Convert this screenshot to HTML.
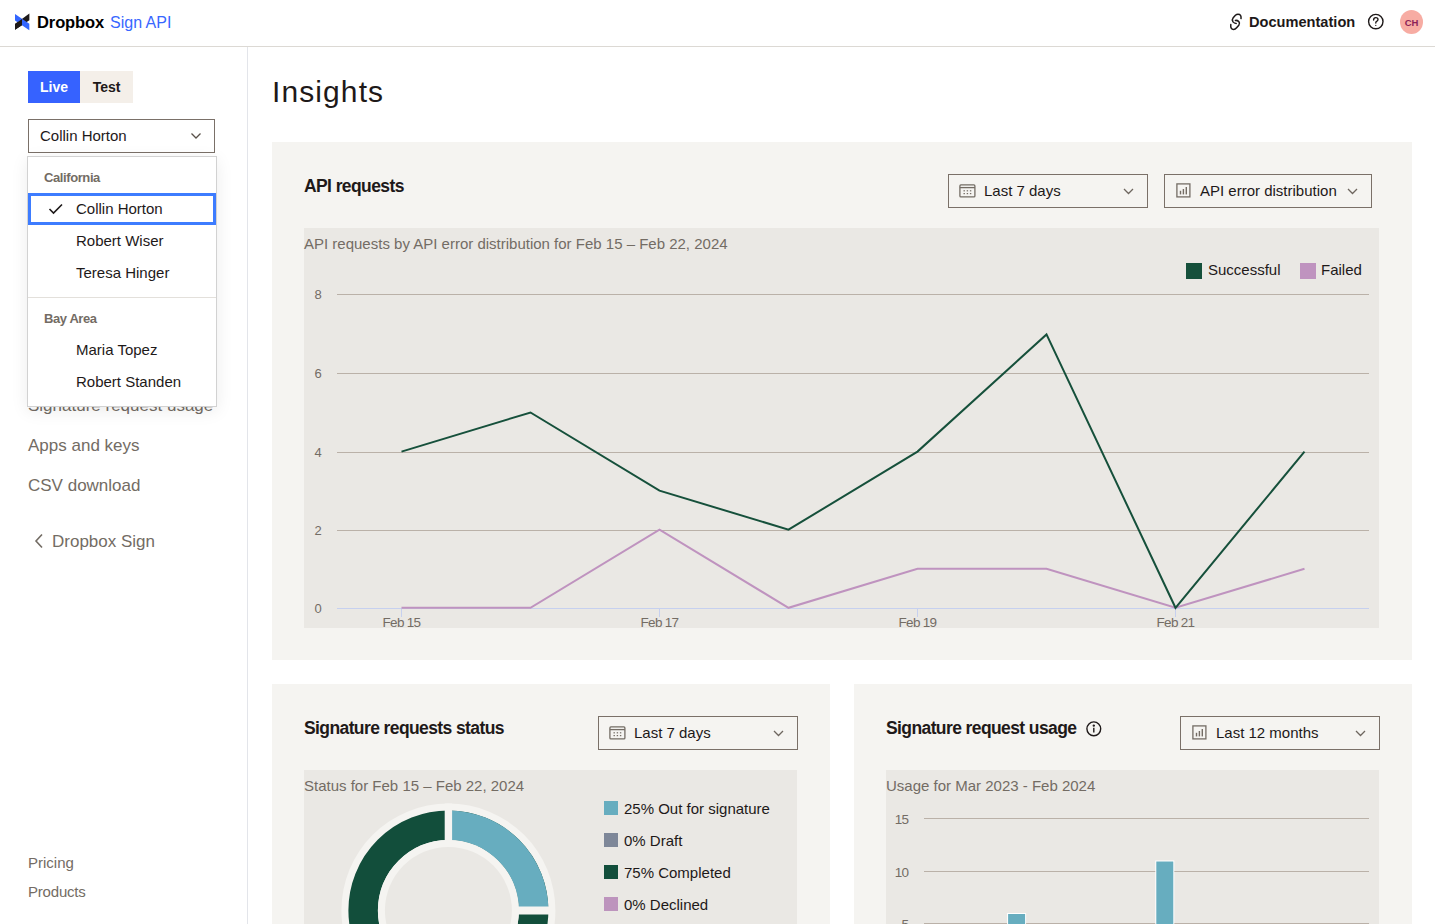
<!DOCTYPE html>
<html><head><meta charset="utf-8">
<style>
*{box-sizing:border-box;margin:0;padding:0}
html,body{width:1435px;height:924px;overflow:hidden;background:#fff;font-family:"Liberation Sans",sans-serif;color:#1e1919}
.a{position:absolute}
.hdr{left:0;top:0;width:1435px;height:47px;border-bottom:1px solid #dcd9d4;background:#fff}
.side{left:0;top:47px;width:248px;height:877px;border-right:1px solid #e3e5ea;background:#fff}
.nav{left:28px;font-size:17px;color:#736c64;white-space:nowrap}
.card{background:#f5f4f1}
.area{background:#eae8e4}
.sel{border:1px solid #7a7068;background:#f5f4f1;height:34px}
.sel .t{position:absolute;top:8px;font-size:15px;color:#1e1919;white-space:nowrap}
.sub{font-size:15px;color:#736c64;white-space:nowrap}
.ttl{font-size:17.5px;font-weight:bold;white-space:nowrap;letter-spacing:-0.6px}
.yl{font-size:13px;color:#736c64}
.xl{font-size:12px;color:#736c64;white-space:nowrap}
.mi{position:absolute;left:76px;font-size:15px;color:#1e1919;white-space:nowrap}
.lg{position:absolute;font-size:15px;color:#1e1919;white-space:nowrap}
.sq{position:absolute;width:15px;height:15px}
</style></head><body>

<!-- header -->
<div class="a hdr"></div>
<svg class="a" style="left:0;top:0" width="40" height="40" viewBox="0 0 40 40">
  <defs><clipPath id="lh"><rect x="0" y="0" width="22" height="40"/></clipPath></defs>
  <polygon points="15,24 29.4,13.6 29.4,20.2 15,29.8" fill="#1e1919"/>
  <polygon points="15,13.9 29.3,23.8 29.3,30.3 15,20.4" fill="#3366ff"/>
  <polygon points="15,24 29.4,13.6 29.4,20.2 15,29.8" fill="#1e1919" clip-path="url(#lh)"/>
</svg>
<div class="a" style="left:37px;top:13px;font-size:16.5px;font-weight:bold;color:#000;white-space:nowrap;letter-spacing:-0.1px">Dropbox</div>
<div class="a" style="left:110px;top:14px;font-size:16px;color:#3867ff;white-space:nowrap">Sign API</div>

<svg class="a" style="left:1224px;top:10px" width="24" height="24" viewBox="0 0 24 24" fill="none" stroke="#1e1919" stroke-width="1.5" stroke-linecap="round">
  <path d="M17 8.6 Q17.6 4.2 14 4.2 Q12.6 4.2 11.4 5.3 L9.2 7.8 Q7.6 9.8 9 11.9 Q10.2 13.4 12.2 13.4"/>
  <path d="M11.4 10.4 Q13.4 10.2 14.8 11.6 Q16.2 13.2 14.8 15.2 L12.6 17.8 Q11.2 19.5 9.6 19.5 Q6.2 19.3 6.8 14.6"/>
</svg>
<div class="a" style="left:1249px;top:14px;font-size:14.6px;font-weight:bold;color:#1e1919;white-space:nowrap">Documentation</div>
<svg class="a" style="left:1367px;top:13px" width="18" height="18" viewBox="0 0 18 18" fill="none" stroke="#1e1919" stroke-width="1.4">
  <circle cx="8.8" cy="8.6" r="7.2"/>
  <path d="M6.6 7 Q6.6 4.6 8.8 4.6 Q11 4.6 11 6.6 Q11 8 9.3 8.6 Q8.8 8.9 8.8 10" stroke-linecap="round"/>
  <circle cx="8.8" cy="12.4" r="0.6" fill="#1e1919" stroke="none"/>
</svg>
<div class="a" style="left:1400px;top:10px;width:23px;height:24px;border-radius:50%;background:#f7aca3;color:#8c1f58;font-size:9.5px;font-weight:bold;text-align:center;line-height:25px">CH</div>

<!-- sidebar -->
<div class="a side"></div>
<div class="a" style="left:28px;top:71px;width:52px;height:32px;background:#3662ff;color:#fff;font-size:14px;font-weight:bold;text-align:center;line-height:32px">Live</div>
<div class="a" style="left:80px;top:71px;width:53px;height:32px;background:#f4efe9;color:#1e1919;font-size:14px;font-weight:bold;text-align:center;line-height:32px">Test</div>

<div class="a" style="left:28px;top:119px;width:187px;height:34px;border:1px solid #7a7068;background:#fff"></div>
<div class="a" style="left:40px;top:127px;font-size:15px;color:#1e1919;white-space:nowrap">Collin Horton</div>
<svg class="a" style="left:190px;top:132px" width="12" height="8" viewBox="0 0 12 8" fill="none" stroke="#5a5149" stroke-width="1.3"><path d="M1.5 1.5 L6 6 L10.5 1.5"/></svg>

<div class="a nav" style="top:396px">Signature request usage</div>
<div class="a nav" style="top:436px">Apps and keys</div>
<div class="a nav" style="top:476px">CSV download</div>
<svg class="a" style="left:34px;top:533px" width="10" height="16" viewBox="0 0 10 16" fill="none" stroke="#736c64" stroke-width="1.6"><path d="M8 1.5 L2 8 L8 14.5"/></svg>
<div class="a nav" style="left:52px;top:532px">Dropbox Sign</div>
<div class="a" style="left:28px;top:854px;font-size:15px;color:#736c64">Pricing</div>
<div class="a" style="left:28px;top:883px;font-size:15px;color:#736c64;letter-spacing:-0.2px">Products</div>

<!-- dropdown menu -->
<div class="a" style="left:27px;top:156px;width:190px;height:251px;background:#fff;border:1px solid #d2d2d2;box-shadow:0 4px 16px rgba(0,0,0,0.08)"></div>
<div class="a" style="left:44px;top:170px;font-size:13px;font-weight:bold;color:#736c64;letter-spacing:-0.4px">California</div>
<div class="a" style="left:28px;top:193px;width:188px;height:32px;border:3px solid #3d7cff"></div>
<svg class="a" style="left:48px;top:203px" width="16" height="12" viewBox="0 0 16 12" fill="none" stroke="#1e1919" stroke-width="1.6"><path d="M1.5 6 L5.5 10 L14 1.5"/></svg>
<div class="mi" style="top:200px">Collin Horton</div>
<div class="mi" style="top:232px">Robert Wiser</div>
<div class="mi" style="top:264px">Teresa Hinger</div>
<div class="a" style="left:28px;top:297px;width:188px;height:1px;background:#e3e0db"></div>
<div class="a" style="left:44px;top:311px;font-size:13px;font-weight:bold;color:#736c64;letter-spacing:-0.4px">Bay Area</div>
<div class="mi" style="top:341px">Maria Topez</div>
<div class="mi" style="top:373px">Robert Standen</div>

<!-- main -->
<div class="a" style="left:272px;top:75px;font-size:30px;color:#1e1919;letter-spacing:1.1px;white-space:nowrap">Insights</div>

<!-- API requests card -->
<div class="a card" style="left:272px;top:142px;width:1140px;height:518px"></div>
<div class="a ttl" style="left:304px;top:176px">API requests</div>
<div class="a sel" style="left:948px;top:174px;width:200px"></div>
<div class="a" style="left:984px;top:182px;font-size:15px;white-space:nowrap">Last 7 days</div>
<div class="a sel" style="left:1164px;top:174px;width:208px"></div>
<div class="a" style="left:1200px;top:182px;font-size:15px;white-space:nowrap">API error distribution</div>

<div class="a area" style="left:304px;top:228px;width:1075px;height:400px"></div>
<svg class="a" style="left:304px;top:228px" width="1075" height="400" viewBox="0 0 1075 400">
<line x1="33" x2="1065" y1="66.5" y2="66.5" stroke="#bab1a8" stroke-width="1"/>
<line x1="33" x2="1065" y1="145.5" y2="145.5" stroke="#bab1a8" stroke-width="1"/>
<line x1="33" x2="1065" y1="224.5" y2="224.5" stroke="#bab1a8" stroke-width="1"/>
<line x1="33" x2="1065" y1="302.5" y2="302.5" stroke="#bab1a8" stroke-width="1"/>
<line x1="33" x2="1065" y1="380.5" y2="380.5" stroke="#c6d0ef" stroke-width="1"/>
<line x1="97.5" x2="97.5" y1="380" y2="389" stroke="#c6d0ef" stroke-width="1"/>
<line x1="355.5" x2="355.5" y1="380" y2="389" stroke="#c6d0ef" stroke-width="1"/>
<line x1="613.5" x2="613.5" y1="380" y2="389" stroke="#c6d0ef" stroke-width="1"/>
<line x1="871.5" x2="871.5" y1="380" y2="389" stroke="#c6d0ef" stroke-width="1"/>
<text x="10.4" y="70.5" font-size="13" fill="#736c64">8</text>
<text x="10.4" y="149.5" font-size="13" fill="#736c64">6</text>
<text x="10.4" y="228.5" font-size="13" fill="#736c64">4</text>
<text x="10.4" y="306.5" font-size="13" fill="#736c64">2</text>
<text x="10.4" y="384.5" font-size="13" fill="#736c64">0</text>
<text x="97.5" y="399" font-size="13.5" fill="#736c64" text-anchor="middle" letter-spacing="-0.7">Feb 15</text>
<text x="355.5" y="399" font-size="13.5" fill="#736c64" text-anchor="middle" letter-spacing="-0.7">Feb 17</text>
<text x="613.5" y="399" font-size="13.5" fill="#736c64" text-anchor="middle" letter-spacing="-0.7">Feb 19</text>
<text x="871.5" y="399" font-size="13.5" fill="#736c64" text-anchor="middle" letter-spacing="-0.7">Feb 21</text>
<polyline points="97.5,379.8 226.5,379.8 355.5,301.7 484.5,379.8 613.5,340.8 742.5,340.8 871.5,379.8 1000.5,340.8" fill="none" stroke="#bf93bf" stroke-width="2"/>
<polyline points="97.5,223.6 226.5,184.5 355.5,262.6 484.5,301.7 613.5,223.6 742.5,106.4 871.5,379.8 1000.5,223.6" fill="none" stroke="#16503b" stroke-width="2"/>
</svg>
<div class="sq" style="left:1186px;top:263px;width:16px;height:16px;background:#16503b"></div>
<div class="lg" style="left:1208px;top:261px">Successful</div>
<div class="sq" style="left:1300px;top:263px;width:16px;height:16px;background:#bf93bf"></div>
<div class="lg" style="left:1321px;top:261px">Failed</div>
<div class="a sub" style="left:304px;top:235px">API requests by API error distribution for Feb 15 – Feb 22, 2024</div>

<!-- bottom cards -->
<div class="a card" style="left:272px;top:684px;width:558px;height:240px"></div>
<div class="a ttl" style="left:304px;top:718px">Signature requests status</div>
<div class="a sel" style="left:598px;top:716px;width:200px"></div>
<div class="a" style="left:634px;top:724px;font-size:15px;white-space:nowrap">Last 7 days</div>
<div class="a area" style="left:304px;top:770px;width:493px;height:154px"></div>
<div class="a sub" style="left:304px;top:777px">Status for Feb 15 – Feb 22, 2024</div>
<svg class="a" style="left:304px;top:770px" width="493" height="154" viewBox="0 0 493 154">
<circle cx="144.39999999999998" cy="140.5" r="107" fill="#f5f4f1"/>
<circle cx="144.39999999999998" cy="140.5" r="85.25" fill="none" stroke="#124e3b" stroke-width="29.5"/>
<path d="M144.39999999999998 40.5 A100 100 0 0 1 244.39999999999998 140.5 L214.89999999999998 140.5 A70.5 70.5 0 0 0 144.39999999999998 70.0 Z" fill="#67adbf"/>
<rect x="140.7" y="33.5" width="7.4" height="107" fill="#f5f4f1"/>
<rect x="144.4" y="136.5" width="106.5" height="8" fill="#f5f4f1"/>
<circle cx="144.39999999999998" cy="140.5" r="70.5" fill="#f5f4f1"/>
<circle cx="144.39999999999998" cy="140.5" r="63.5" fill="#eae8e4"/>
</svg>
<div class="sq" style="left:604px;top:801px;width:14px;height:14px;background:#67adbf"></div>
<div class="lg" style="left:624px;top:800px">25% Out for signature</div>
<div class="sq" style="left:604px;top:833px;width:14px;height:14px;background:#7e8798"></div>
<div class="lg" style="left:624px;top:832px">0% Draft</div>
<div class="sq" style="left:604px;top:865px;width:14px;height:14px;background:#124e3b"></div>
<div class="lg" style="left:624px;top:864px">75% Completed</div>
<div class="sq" style="left:604px;top:897px;width:14px;height:14px;background:#bd94bd"></div>
<div class="lg" style="left:624px;top:896px">0% Declined</div>


<div class="a card" style="left:854px;top:684px;width:558px;height:240px"></div>
<div class="a ttl" style="left:886px;top:718px">Signature request usage</div>
<div class="a sel" style="left:1180px;top:716px;width:200px"></div>
<div class="a" style="left:1216px;top:724px;font-size:15px;white-space:nowrap">Last 12 months</div>
<div class="a area" style="left:886px;top:770px;width:493px;height:154px"></div>
<div class="a sub" style="left:886px;top:777px">Usage for Mar 2023 - Feb 2024</div>
<svg class="a" style="left:886px;top:770px" width="493" height="154" viewBox="0 0 493 154">
<line x1="38" x2="483" y1="48.5" y2="48.5" stroke="#bab1a8" stroke-width="1"/>
<text x="22.5" y="54" font-size="13.5" fill="#736c64" text-anchor="end" letter-spacing="-0.6">15</text>
<line x1="38" x2="483" y1="101.5" y2="101.5" stroke="#bab1a8" stroke-width="1"/>
<text x="22.5" y="107" font-size="13.5" fill="#736c64" text-anchor="end" letter-spacing="-0.6">10</text>
<line x1="38" x2="483" y1="153.5" y2="153.5" stroke="#bab1a8" stroke-width="1"/>
<text x="22.5" y="159" font-size="13.5" fill="#736c64" text-anchor="end" letter-spacing="-0.6">5</text>
<rect x="121.1" y="143.0" width="19" height="13.0" fill="#fff"/>
<rect x="122.1" y="144.0" width="17" height="13.0" fill="#67adbf"/>
<rect x="269.3" y="90.5" width="19" height="65.5" fill="#fff"/>
<rect x="270.3" y="91.5" width="17" height="65.5" fill="#67adbf"/>
</svg>

<svg class="a" style="left:959px;top:184px" width="17" height="14" viewBox="0 0 17 14" fill="none" stroke="#736c64" stroke-width="1.3">
<rect x="0.9" y="0.9" width="15" height="12" rx="1"/><line x1="0.9" y1="3.6" x2="15.9" y2="3.6"/>
<g fill="#736c64" stroke="none"><rect x="4.5" y="6.2" width="1.4" height="1.2"/><rect x="7.7" y="6.2" width="1.4" height="1.2"/><rect x="10.9" y="6.2" width="1.4" height="1.2"/>
<rect x="4.5" y="9" width="1.4" height="1.2"/><rect x="7.7" y="9" width="1.4" height="1.2"/><rect x="10.9" y="9" width="1.4" height="1.2"/></g></svg>
<svg class="a" style="left:1123px;top:188px" width="11" height="7" viewBox="0 0 11 7" fill="none" stroke="#6e665f" stroke-width="1.3"><path d="M1 1 L5.5 5.5 L10 1"/></svg>
<svg class="a" style="left:1176px;top:183px" width="15" height="15" viewBox="0 0 15 15" fill="none" stroke="#736c64" stroke-width="1.3">
<rect x="0.9" y="0.9" width="13" height="13"/>
<g fill="#736c64" stroke="none"><rect x="3.8" y="7.8" width="1.4" height="3.6"/><rect x="6.7" y="6" width="1.4" height="5.4"/><rect x="9.6" y="4" width="1.4" height="7.4"/></g></svg>
<svg class="a" style="left:1347px;top:188px" width="11" height="7" viewBox="0 0 11 7" fill="none" stroke="#6e665f" stroke-width="1.3"><path d="M1 1 L5.5 5.5 L10 1"/></svg>
<svg class="a" style="left:609px;top:726px" width="17" height="14" viewBox="0 0 17 14" fill="none" stroke="#736c64" stroke-width="1.3">
<rect x="0.9" y="0.9" width="15" height="12" rx="1"/><line x1="0.9" y1="3.6" x2="15.9" y2="3.6"/>
<g fill="#736c64" stroke="none"><rect x="4.5" y="6.2" width="1.4" height="1.2"/><rect x="7.7" y="6.2" width="1.4" height="1.2"/><rect x="10.9" y="6.2" width="1.4" height="1.2"/>
<rect x="4.5" y="9" width="1.4" height="1.2"/><rect x="7.7" y="9" width="1.4" height="1.2"/><rect x="10.9" y="9" width="1.4" height="1.2"/></g></svg>
<svg class="a" style="left:773px;top:730px" width="11" height="7" viewBox="0 0 11 7" fill="none" stroke="#6e665f" stroke-width="1.3"><path d="M1 1 L5.5 5.5 L10 1"/></svg>
<svg class="a" style="left:1192px;top:725px" width="15" height="15" viewBox="0 0 15 15" fill="none" stroke="#736c64" stroke-width="1.3">
<rect x="0.9" y="0.9" width="13" height="13"/>
<g fill="#736c64" stroke="none"><rect x="3.8" y="7.8" width="1.4" height="3.6"/><rect x="6.7" y="6" width="1.4" height="5.4"/><rect x="9.6" y="4" width="1.4" height="7.4"/></g></svg>
<svg class="a" style="left:1355px;top:730px" width="11" height="7" viewBox="0 0 11 7" fill="none" stroke="#6e665f" stroke-width="1.3"><path d="M1 1 L5.5 5.5 L10 1"/></svg>
<svg class="a" style="left:1086px;top:721px" width="16" height="16" viewBox="0 0 16 16" fill="none" stroke="#1e1919" stroke-width="1.4">
<circle cx="7.8" cy="7.8" r="6.9"/><line x1="7.8" y1="6.8" x2="7.8" y2="11.6"/><circle cx="7.8" cy="4.6" r="0.5" fill="#1e1919"/></svg>
</body></html>
